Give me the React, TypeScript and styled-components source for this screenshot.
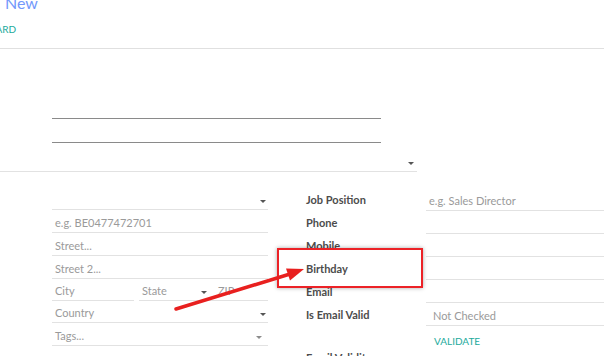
import React from "react";
import styled, { createGlobalStyle } from "styled-components";

const GlobalStyle = createGlobalStyle`
  html, body { margin: 0; padding: 0; background: #fff; }
  body {
    width: 604px; height: 356px; overflow: hidden;
    font-family: Lato, "Open Sans", sans-serif;
    -webkit-font-smoothing: antialiased;
  }
  * { box-sizing: border-box; }
`;

const Page = styled.div`
  position: relative;
  width: 604px;
  height: 356px;
  overflow: hidden;
`;

const ControlPanel = styled.div`
  height: 49px;
  border-bottom: 1px solid #e0e0e0;
  display: flex;
  flex-direction: column;
`;

const Breadcrumb = styled.div`
  margin-top: -5px;
  padding-left: 5px;
  font-size: 16px;
  line-height: 16px;
  color: #7398fb;
`;

const ButtonBar = styled.div`
  margin-top: 12px;
  display: flex;
`;

const LinkButton = styled.button<{ $offset?: number }>`
  border: 0;
  background: none;
  padding: 0;
  font-family: inherit;
  font-size: 10px;
  line-height: 12px;
  text-transform: uppercase;
  color: #22aa9c;
  margin-left: ${(p) => p.$offset ?? 0}px;
  cursor: pointer;
`;

const Sheet = styled.div`
  padding-left: 52px;
  display: flex;
  flex-direction: column;
`;

const TitleBlock = styled.div`
  margin-top: 46px;
  width: 329px;
  display: flex;
  flex-direction: column;
`;

const NameInput = styled.input`
  height: 24px;
  border: 0;
  border-bottom: 1px solid #8a8a8a;
  outline: none;
  background: transparent;
  font-family: inherit;
  font-size: 16px;
  padding: 0 3px;
`;

const WideSelect = styled.div`
  margin-left: -52px;
  width: 417px;
  height: 29px;
  border-bottom: 1px solid #e2e2e2;
  display: flex;
  align-items: center;
  justify-content: flex-end;
  padding: 12px 3px 0 0;
`;

const Caret = styled.span<{ $light?: boolean }>`
  display: inline-block;
  width: 0;
  height: 0;
  border-left: 3px solid transparent;
  border-right: 3px solid transparent;
  border-top: 3px solid ${(p) => (p.$light ? "#8c8c8c" : "#555")};
  flex: none;
`;

const Group = styled.div`
  margin-top: 15px;
  display: grid;
  grid-template-columns: 216px 1fr;
  column-gap: 38px;
  align-items: start;
`;

const LeftCol = styled.div`
  display: flex;
  flex-direction: column;
`;

const Field = styled.div<{ $h?: number; $w?: number; $grow?: boolean; $pl?: number; $pr?: number }>`
  height: ${(p) => (p.$h ?? 22) + 1}px;
  ${(p) => (p.$w ? `width: ${p.$w}px;` : "")}
  flex: ${(p) => (p.$grow ? "1 1 0" : "none")};
  min-width: 0;
  border-bottom: 1px solid #e2e2e2;
  display: flex;
  align-items: flex-end;
  justify-content: space-between;
  padding: 0 ${(p) => p.$pr ?? 2}px 2px ${(p) => p.$pl ?? 3}px;
  font-size: 11px;
  line-height: 14px;
  color: #9a9a9a;
  white-space: nowrap;
`;

const CaretBox = styled.span`
  display: flex;
  align-items: center;
  height: 12px;
`;

const AddressRow = styled.div`
  display: flex;
  gap: 5px;
`;

const StateZip = styled.div`
  display: flex;
  flex: 1;
  min-width: 0;
`;

const RightCol = styled.div`
  padding-top: 1px;
  display: grid;
  grid-template-columns: 120px 1fr;
  grid-template-rows: repeat(6, 23px) 20px 23px;
`;

const Label = styled.div`
  height: 22px;
  display: flex;
  align-items: center;
  font-size: 11px;
  font-weight: 700;
  color: #4c4c4c;
  white-space: nowrap;
`;

const Badge = styled.span`
  padding-left: 4px;
`;

const ActionCell = styled.div`
  grid-column: 2;
  display: flex;
  align-items: flex-start;
  padding: 9px 0 0 8px;
`;

const HighlightBox = styled.div`
  position: absolute;
  left: 277px;
  top: 248px;
  width: 146px;
  height: 40px;
  border: 2px solid #ec2227;
  box-shadow: 0 0 4px rgba(0, 0, 0, 0.35);
  pointer-events: none;
`;

const ArrowLayer = styled.svg`
  position: absolute;
  left: 0;
  top: 0;
  pointer-events: none;
`;

export default function App() {
  return (
    <>
      <GlobalStyle />
      <Page>
        <ControlPanel>
          <Breadcrumb>New</Breadcrumb>
          <ButtonBar>
            <LinkButton $offset={-27}>Discard</LinkButton>
          </ButtonBar>
        </ControlPanel>
        <Sheet>
          <TitleBlock>
            <NameInput aria-label="Name" />
            <NameInput aria-label="Company" />
          </TitleBlock>
          <WideSelect>
            <Caret />
          </WideSelect>
          <Group>
            <LeftCol>
              <Field>
                <span />
                <CaretBox><Caret /></CaretBox>
              </Field>
              <Field>e.g. BE0477472701</Field>
              <Field>Street...</Field>
              <Field>Street 2...</Field>
              <AddressRow>
                <Field $h={21} $w={82}>City</Field>
                <StateZip>
                  <Field $h={21} $w={73} $pr={5}>
                    <span>State</span>
                    <CaretBox><Caret /></CaretBox>
                  </Field>
                  <Field $h={21} $grow $pl={6}>ZIP</Field>
                </StateZip>
              </AddressRow>
              <Field $h={21}>
                <span>Country</span>
                <CaretBox><Caret /></CaretBox>
              </Field>
              <Field $pr={6}>
                <span>Tags...</span>
                <CaretBox><Caret $light /></CaretBox>
              </Field>
            </LeftCol>
            <RightCol>
              <Label>Job Position</Label>
              <Field>e.g. Sales Director</Field>
              <Label>Phone</Label>
              <Field />
              <Label>Mobile</Label>
              <Field />
              <Label>Birthday</Label>
              <Field />
              <Label>Email</Label>
              <Field />
              <Label>Is Email Valid</Label>
              <Field>
                <Badge>Not Checked</Badge>
              </Field>
              <ActionCell>
                <LinkButton>Validate</LinkButton>
              </ActionCell>
              <Label>Email Validity</Label>
              <Field />
            </RightCol>
          </Group>
        </Sheet>
        <HighlightBox />
        <ArrowLayer width="604" height="356" viewBox="0 0 604 356">
          <line x1="176" y1="309" x2="290" y2="274" stroke="#e8201f" strokeWidth="3.5" strokeLinecap="round" />
          <polygon points="304,269 286,268.5 290,280.5" fill="#e8201f" />
        </ArrowLayer>
      </Page>
    </>
  );
}
